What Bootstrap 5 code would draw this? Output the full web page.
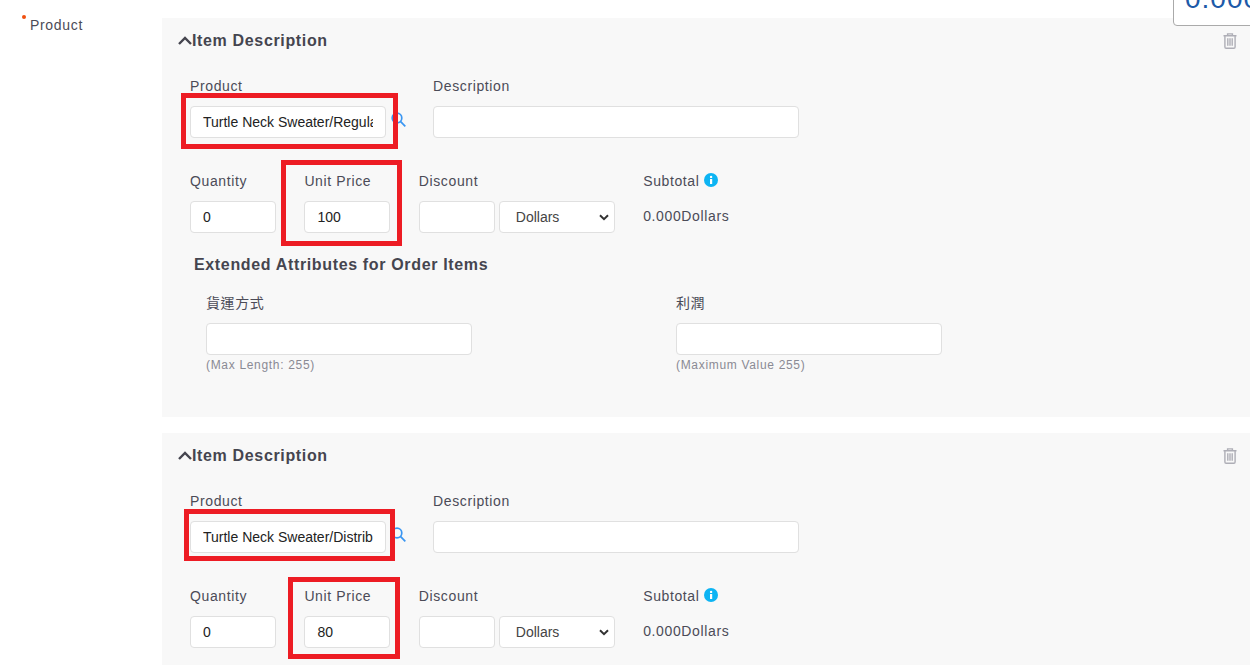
<!DOCTYPE html>
<html lang="en">
<head>
<meta charset="utf-8">
<title>Item Description</title>
<link href="https://cdn.jsdelivr.net/npm/bootstrap@5.3.0/dist/css/bootstrap.min.css" rel="stylesheet">
<style>
html,body{height:665px;overflow:hidden}
body{font-family:"Liberation Sans","Noto Sans CJK TC",sans-serif;font-size:14px;color:#4b4b57;letter-spacing:.62px;background:#fff;position:relative}
.side-col{width:162px;flex:none;padding:16px 0 0 30px;line-height:18px;position:relative;letter-spacing:.68px}
.req-dot{position:absolute;left:22px;top:15px;width:4px;height:4px;border-radius:50%;background:#f0500f}
.main-col{flex:1;min-width:0;padding-top:18px}
.item-panel{background:#f8f8f8;position:relative;height:399px;margin-bottom:16px}
.panel-head{height:44px;padding:1px 13px 0 16px}
.panel-title{font-size:16px;font-weight:700;line-height:22px;margin:0;color:#45454f;letter-spacing:.65px}
.chev{width:14px;height:9px;flex:none}
.trash{width:14px;height:16px}
.panel-body{padding:14px 0 0 28px}
.fld-label{display:block;line-height:20px;height:20px;margin:0 0 10px}
.form-control.fld,.form-select.fld{height:32px;min-height:32px;padding:0 12px;font-size:14px;letter-spacing:0;border-color:#e0e0e0;border-radius:4px;color:#222;background-color:#fff;font-family:inherit}
.form-select.fld{padding:0 24px 0 16px;background-image:url("data:image/svg+xml,%3csvg xmlns='http://www.w3.org/2000/svg' viewBox='0 0 10 7'%3e%3cpath fill='none' stroke='%23333' stroke-width='2' d='M1 1.2 5 5.2l4-4'/%3e%3c/svg%3e");background-position:right 5px center;background-size:10px 7px;color:#444}
.w-product{width:196px;padding-right:12px}
.w-desc{width:366px}
.w-qty{width:86px}
.w-disc{width:76px}
.w-cur{width:116px}
.w-attr{width:266px}
.search-ico{width:15px;height:15px;margin:0 27px 11px 5px;flex:none}
.row-a{display:flex;margin-bottom:33px}
.row-b{display:flex;gap:28.4px;margin-bottom:21px}
.sub-val{line-height:32px;letter-spacing:.63px;margin-top:-1px}
.info-ico{width:14px;height:14px;vertical-align:-1px}
.ext-title{font-size:16px;font-weight:700;line-height:22px;margin:0 0 17px 4px;color:#45454f;letter-spacing:.65px}
.attr-wrap{display:flex;gap:204px;padding-left:16px}
.hint{font-size:12px;color:#8a8a94;line-height:16px;margin-top:2px;letter-spacing:.68px}
.mark-box{position:absolute;border:5px solid #ed1c24;pointer-events:none}
.m1{left:19px;top:75px;width:217px;height:56px}
.m2{left:119px;top:142px;width:121px;height:86px}
.m3{left:22px;top:76px;width:211px;height:52px}
.m4{left:126px;top:144px;width:112px;height:82px}
.total-box{position:absolute;left:1173px;top:-20px;width:100px;height:46px;background:#fff;border:1px solid #aaa;border-radius:4px;padding:0 0 0 11px;color:#1d5aa8;font-size:28px;line-height:36px;letter-spacing:1px;overflow:hidden;white-space:nowrap;z-index:2}
</style>
</head>
<body>
<div class="d-flex">
  <div class="side-col"><span class="req-dot"></span>Product</div>
  <div class="main-col">
    <section class="item-panel">
      <div class="panel-head d-flex align-items-center justify-content-between">
        <div class="d-flex align-items-center">
          <svg class="chev" viewBox="0 0 14 9"><path d="M1 8 7 2l6 6" fill="none" stroke="#45454f" stroke-width="2.4"/></svg>
          <h2 class="panel-title">Item Description</h2>
        </div>
        <svg class="trash" viewBox="0 0 14 16" fill="none" stroke="#aeaeb6" stroke-width="1.4"><path d="M.5 2.7h13M4.6 2.5V.9h4.8v1.6M1.9 2.7v11.4c0 .8.5 1.2 1.2 1.2h7.8c.7 0 1.2-.4 1.2-1.2V2.7M4.8 5.2v7.6M7 5.2v7.6M9.2 5.2v7.6"/></svg>
      </div>
      <div class="panel-body">
        <div class="row-a">
          <div><label class="fld-label">Product</label><input class="form-control fld w-product" value="Turtle Neck Sweater/Regular"></div>
          <svg class="search-ico align-self-end" viewBox="0 0 15 15" fill="none" stroke="#3a96f2" stroke-width="1.7"><circle cx="6" cy="6" r="4.8"/><path d="M9.4 9.4 14.3 14.3"/></svg>
          <div><label class="fld-label">Description</label><input class="form-control fld w-desc"></div>
        </div>
        <div class="row-b">
          <div><label class="fld-label">Quantity</label><input class="form-control fld w-qty" value="0"></div>
          <div><label class="fld-label">Unit Price</label><input class="form-control fld w-qty" value="100"></div>
          <div><label class="fld-label">Discount</label>
            <div class="d-flex gap-1"><input class="form-control fld w-disc"><select class="form-select fld w-cur"><option>Dollars</option></select></div></div>
          <div><label class="fld-label">Subtotal <svg class="info-ico" viewBox="0 0 14 14"><circle cx="7" cy="7" r="7" fill="#0db4f3"/><rect x="6" y="6" width="2.2" height="5" fill="#fff"/><circle cx="7.1" cy="3.9" r="1.2" fill="#fff"/></svg></label><div class="sub-val">0.000Dollars</div></div>
        </div>
        <h3 class="ext-title">Extended Attributes for Order Items</h3>
        <div class="attr-wrap">
          <div><label class="fld-label">貨運方式</label><input class="form-control fld w-attr"><div class="hint">(Max Length: 255)</div></div>
          <div><label class="fld-label">利潤</label><input class="form-control fld w-attr"><div class="hint">(Maximum Value 255)</div></div>
        </div>
      </div>
      <div class="mark-box m1"></div>
      <div class="mark-box m2"></div>
    </section>
    <section class="item-panel">
      <div class="panel-head d-flex align-items-center justify-content-between">
        <div class="d-flex align-items-center">
          <svg class="chev" viewBox="0 0 14 9"><path d="M1 8 7 2l6 6" fill="none" stroke="#45454f" stroke-width="2.4"/></svg>
          <h2 class="panel-title">Item Description</h2>
        </div>
        <svg class="trash" viewBox="0 0 14 16" fill="none" stroke="#aeaeb6" stroke-width="1.4"><path d="M.5 2.7h13M4.6 2.5V.9h4.8v1.6M1.9 2.7v11.4c0 .8.5 1.2 1.2 1.2h7.8c.7 0 1.2-.4 1.2-1.2V2.7M4.8 5.2v7.6M7 5.2v7.6M9.2 5.2v7.6"/></svg>
      </div>
      <div class="panel-body">
        <div class="row-a">
          <div><label class="fld-label">Product</label><input class="form-control fld w-product" value="Turtle Neck Sweater/Distributor"></div>
          <svg class="search-ico align-self-end" viewBox="0 0 15 15" fill="none" stroke="#3a96f2" stroke-width="1.7"><circle cx="6" cy="6" r="4.8"/><path d="M9.4 9.4 14.3 14.3"/></svg>
          <div><label class="fld-label">Description</label><input class="form-control fld w-desc"></div>
        </div>
        <div class="row-b">
          <div><label class="fld-label">Quantity</label><input class="form-control fld w-qty" value="0"></div>
          <div><label class="fld-label">Unit Price</label><input class="form-control fld w-qty" value="80"></div>
          <div><label class="fld-label">Discount</label>
            <div class="d-flex gap-1"><input class="form-control fld w-disc"><select class="form-select fld w-cur"><option>Dollars</option></select></div></div>
          <div><label class="fld-label">Subtotal <svg class="info-ico" viewBox="0 0 14 14"><circle cx="7" cy="7" r="7" fill="#0db4f3"/><rect x="6" y="6" width="2.2" height="5" fill="#fff"/><circle cx="7.1" cy="3.9" r="1.2" fill="#fff"/></svg></label><div class="sub-val">0.000Dollars</div></div>
        </div>
      </div>
      <div class="mark-box m3"></div>
      <div class="mark-box m4"></div>
    </section>
  </div>
</div>
<div class="total-box">0.000</div>
<script src="https://cdn.jsdelivr.net/npm/bootstrap@5.3.0/dist/js/bootstrap.bundle.min.js"></script>
</body>
</html>
